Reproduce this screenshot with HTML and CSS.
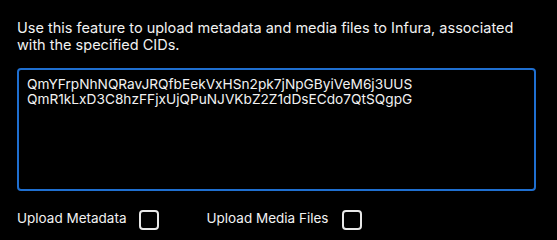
FILE: index.html
```html
<!DOCTYPE html>
<html>
<head>
<meta charset="utf-8">
<link rel="stylesheet" href="styles.css">
</head>
<body>
<div class="panel">
  <p class="intro">Use this feature to upload metadata and media files to Infura, associated with the specified CIDs.</p>
  <textarea class="cids" spellcheck="false">QmYFrpNhNQRavJRQfbEekVxHSn2pk7jNpGByiVeM6j3UUS
QmR1kLxD3C8hzFFjxUjQPuNJVKbZ2Z1dDsECdo7QtSQgpG</textarea>
  <div class="options">
    <label class="opt">Upload Metadata <span class="box"></span></label>
    <label class="opt">Upload Media Files <span class="box"></span></label>
  </div>
</div>
</body>
</html>
```

FILE: styles.css
```css
html, body {
  margin: 0;
  background: #000;
}
.panel {
  padding: 19px 21px 0 17px;
  font-family: Inter, "Liberation Sans", Arial, sans-serif;
  color: #f2f2f2;
}
.intro {
  margin: 0;
  font-size: 14.5px;
  line-height: 17px;
  width: 520px;
}
.cids {
  display: block;
  box-sizing: border-box;
  margin-top: 15px;
  width: 519px;
  height: 123px;
  padding: 7px 8px;
  background: #000;
  color: #f2f2f2;
  border: 2px solid #1f6fd0;
  border-radius: 4px;
  font-family: Inter, "Liberation Sans", Arial, sans-serif;
  font-size: 13.7px;
  line-height: 15px;
  resize: none;
  outline: none;
}
.options {
  display: flex;
  gap: 48px;
  margin-top: 18px;
}
.opt {
  display: flex;
  align-items: flex-start;
  gap: 12px;
  font-size: 13.5px;
  line-height: 18px;
}
.opt + .opt {
  gap: 14px;
}
.box {
  width: 16px;
  height: 16px;
  border: 2px solid #e8e8e8;
  border-radius: 4px;
  margin-top: 1px;
}
```
